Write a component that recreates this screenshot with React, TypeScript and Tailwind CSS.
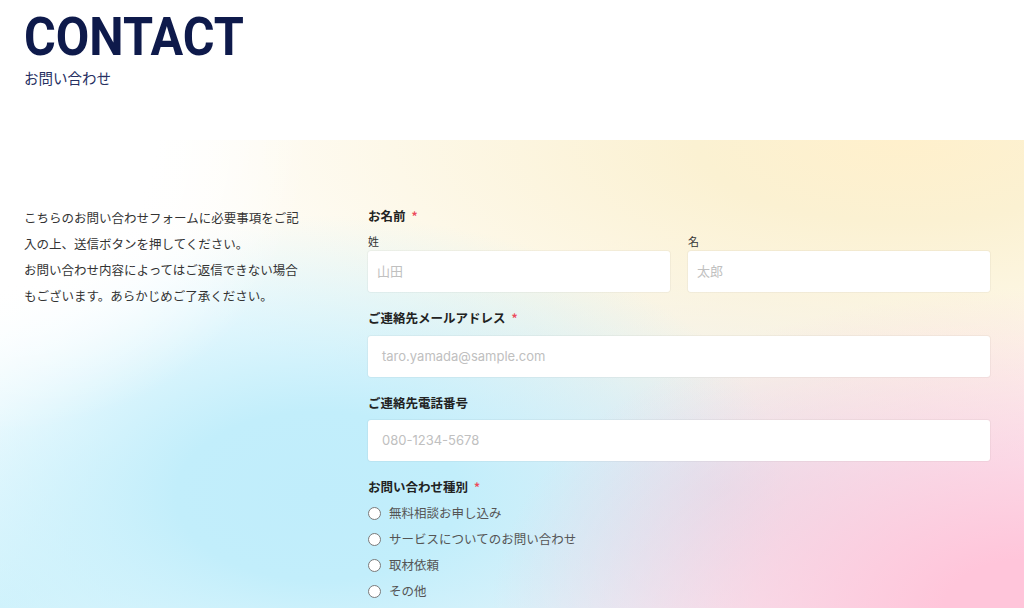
const jp = "font-['Noto_Sans_CJK_JP','Noto_Sans',sans-serif]";

const inquiryTypes = [
  "無料相談お申し込み",
  "サービスについてのお問い合わせ",
  "取材依頼",
  "その他",
];

function Label({ text, required }: { text: string; required?: boolean }) {
  return (
    <div className={`${jp} flex items-center gap-[6px] text-[12.5px] leading-[18px] font-bold text-[#222]`}>
      <span>{text}</span>
      {required && <span className="text-[12px] text-[#ec4b5c]">*</span>}
    </div>
  );
}

function Field({ placeholder, pad }: { placeholder: string; pad: string }) {
  return (
    <div
      className={`flex h-[41px] w-full items-center rounded-[3px] bg-white shadow-[0_0_0_1px_rgba(0,0,0,0.035)] ${pad}`}
    >
      <span className="font-['Inter','Noto_Sans_CJK_JP',sans-serif] text-[13px] text-[#c0c0c0]">
        {placeholder}
      </span>
    </div>
  );
}

export default function App() {
  return (
    <div className="h-[608px] w-full overflow-hidden bg-white">
      {/* Header */}
      <header className="h-[140px] px-[24px] pt-[10px]">
        <h1 className="origin-left scale-x-[0.9] font-['Roboto',sans-serif] text-[54px] leading-none font-bold text-[#0e1a4b]">
          CONTACT
        </h1>
        <p className={`${jp} mt-[4px] text-[14.5px] leading-[20px] text-[#262f62]`}>お問い合わせ</p>
      </header>

      {/* Form section */}
      <section className="flex h-[468px] bg-[radial-gradient(ellipse_30%_62%_at_0%_0%,#ffffff_0%,#ffffff_50%,rgba(255,255,255,0)_100%),radial-gradient(ellipse_52%_68%_at_100%_100%,#ffc5da_0%,#ffc5da_15%,rgba(255,197,218,0)_100%),radial-gradient(ellipse_46%_60%_at_31%_76%,#c0edfb_0%,#c2eefb_30%,rgba(194,238,251,0)_100%),radial-gradient(ellipse_25%_40%_at_0%_100%,#d6f4fc_0%,rgba(214,244,252,0)_100%),radial-gradient(ellipse_80%_70%_at_88%_0%,#fff0cc_0%,#fbf1d2_25%,rgba(251,241,210,0)_100%),radial-gradient(ellipse_45%_55%_at_70%_75%,#e2e6ee_0%,rgba(226,230,238,0)_100%),linear-gradient(#ffffff,#ffffff)] pt-[65px] pl-[24px] pr-[34px]">
        <div className={`${jp} w-[280px] shrink-0 text-[12.5px] leading-[26px] text-[#333]`}>
          <p>こちらのお問い合わせフォームに必要事項をご記入の上、送信ボタンを押してください。</p>
          <p>お問い合わせ内容によってはご返信できない場合もございます。あらかじめご了承ください。</p>
        </div>

        <form className="ml-[64px] mt-[2px] flex flex-1 flex-col">
          <Label text="お名前" required />
          <div className="mt-[8px] flex gap-[18px]">
            <div className="flex flex-1 flex-col">
              <span className={`${jp} text-[11px] leading-[16px] text-[#333]`}>姓</span>
              <div className="mt-[2px]">
                <Field placeholder="山田" pad="pl-[9px]" />
              </div>
            </div>
            <div className="flex flex-1 flex-col">
              <span className={`${jp} text-[11px] leading-[16px] text-[#333]`}>名</span>
              <div className="mt-[2px]">
                <Field placeholder="太郎" pad="pl-[9px]" />
              </div>
            </div>
          </div>

          <div className="mt-[17px]">
            <Label text="ご連絡先メールアドレス" required />
          </div>
          <div className="mt-[9px]">
            <Field placeholder="taro.yamada@sample.com" pad="pl-[14px]" />
          </div>

          <div className="mt-[17px]">
            <Label text="ご連絡先電話番号" />
          </div>
          <div className="mt-[8px]">
            <Field placeholder="080-1234-5678" pad="pl-[14px]" />
          </div>

          <div className="mt-[17px]">
            <Label text="お問い合わせ種別" required />
          </div>
          <div className="mt-[4px] flex flex-col">
            {inquiryTypes.map((t) => (
              <label key={t} className="flex h-[26px] items-center gap-[8px]">
                <span className="h-[13px] w-[13px] rounded-full border border-[#7a7a7a] bg-white" />
                <span className={`${jp} text-[12.5px] text-[#555]`}>{t}</span>
              </label>
            ))}
          </div>
        </form>
      </section>
    </div>
  );
}
